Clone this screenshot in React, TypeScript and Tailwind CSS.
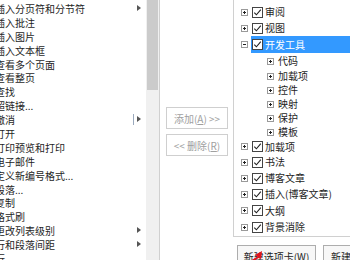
import React from "react";

const font = { fontFamily: '"Noto Sans CJK SC", "Noto Sans", sans-serif' };

const commands: { label: string; sub?: boolean }[] = [
  { label: "插入分页符和分节符", sub: true },
  { label: "插入批注" },
  { label: "插入图片" },
  { label: "插入文本框" },
  { label: "查看多个页面" },
  { label: "查看整页" },
  { label: "查找" },
  { label: "超链接..." },
  { label: "撤消", sub: true },
  { label: "打开" },
  { label: "打印预览和打印" },
  { label: "电子邮件" },
  { label: "定义新编号格式..." },
  { label: "段落..." },
  { label: "复制" },
  { label: "格式刷" },
  { label: "更改列表级别", sub: true },
  { label: "行和段落间距", sub: true },
  { label: "行" },
];

type Node = { label: string; h: string; child?: boolean; open?: boolean; selected?: boolean };

const tree: Node[] = [
  { label: "审阅", h: "h-[16px]" },
  { label: "视图", h: "h-[16px]" },
  { label: "开发工具", h: "h-[17px]", open: true, selected: true },
  { label: "代码", h: "h-[16px]", child: true },
  { label: "加载项", h: "h-[14px]", child: true },
  { label: "控件", h: "h-[14px]", child: true },
  { label: "映射", h: "h-[14px]", child: true },
  { label: "保护", h: "h-[14px]", child: true },
  { label: "模板", h: "h-[14px]", child: true },
  { label: "加载项", h: "h-[15px]" },
  { label: "书法", h: "h-[16px]" },
  { label: "博客文章", h: "h-[16px]" },
  { label: "插入(博客文章)", h: "h-[16.5px]" },
  { label: "大纲", h: "h-[16.5px]" },
  { label: "背景消除", h: "h-[16.5px]" },
];

function ExpandBox({ open }: { open?: boolean }) {
  return (
    <svg width="7" height="7" viewBox="0 0 7 7" className="shrink-0">
      <rect x="0.5" y="0.5" width="6" height="6" fill="white" stroke="#9a9a9a" />
      <line x1="2" y1="3.5" x2="5" y2="3.5" stroke="#222" />
      {!open && <line x1="3.5" y1="2" x2="3.5" y2="5" stroke="#222" />}
    </svg>
  );
}

function Check() {
  return (
    <svg width="11" height="11" viewBox="0 0 11 11" className="shrink-0">
      <rect x="0.5" y="0.5" width="10" height="10" fill="white" stroke="#444" />
      <path d="M2.3 5.6 L4.4 7.8 L8.8 2.6" fill="none" stroke="#222" strokeWidth="1.1" />
    </svg>
  );
}

function Arrow() {
  return (
    <svg width="4" height="6" viewBox="0 0 4 6" className="shrink-0">
      <path d="M0 0 L4 3 L0 6 Z" fill="#555" />
    </svg>
  );
}

export default function App() {
  return (
    <div
      className="relative flex w-[350px] h-[260px] overflow-hidden bg-white text-[10px] text-[#1e1e1e]"
      style={font}
    >
      {/* command list */}
      <div className="flex w-[160px] shrink-0">
        <div className="w-[146px] overflow-hidden pt-[2px]">
          {commands.map((c, i) => (
            <div key={i} className="flex h-[13.9px] items-center justify-between pr-[5px]">
              <span className="ml-[-5px] whitespace-nowrap leading-none">{c.label}</span>
              {c.sub && (
                <div className="flex items-center gap-[3px] -translate-y-[1px]">
                  {c.label === "撤消" && <div className="h-[11px] w-[1px] bg-[#9aa9bd]" />}
                  <Arrow />
                </div>
              )}
            </div>
          ))}
        </div>
        <div className="w-[14px] shrink-0 border-r border-[#d0d0d0] bg-[#f0f0f0]">
          <div className="mx-[1px] h-[90px] bg-[#cbcbcb]" />
        </div>
      </div>

      {/* add / remove buttons */}
      <div className="flex w-[73px] shrink-0 flex-col gap-[5px] pl-[6px] pt-[107px]">
        <div className="flex h-[22px] w-[62px] items-center justify-center border border-[#cfcfcf] text-[#a0a0a0]">
          添加(<span className="underline">A</span>) &gt;&gt;
        </div>
        <div className="flex h-[22px] w-[62px] items-center justify-center border border-[#cfcfcf] text-[#a0a0a0]">
          &lt;&lt; 删除(<span className="underline">R</span>)
        </div>
      </div>

      {/* ribbon tree */}
      <div className="flex flex-1 flex-col">
        <div className="h-[238px] border-b border-l border-[#d0d0d0] pt-[4px]">
          {tree.map((n, i) =>
            n.child ? (
              <div key={i} className={`flex ${n.h} items-center gap-[4px] pl-[33px]`}>
                <ExpandBox />
                <span className="whitespace-nowrap leading-none">{n.label}</span>
              </div>
            ) : (
              <div key={i} className={`flex ${n.h} items-center gap-[3px] pl-[7px] pr-[3px]`}>
                <ExpandBox open={n.open} />
                <div
                  className={`flex h-full flex-1 items-center gap-[2px] pl-[1px] ${
                    n.selected ? "bg-[#3399ff] text-white" : ""
                  }`}
                >
                  <Check />
                  <span className="whitespace-nowrap leading-none">{n.label}</span>
                </div>
              </div>
            )
          )}
        </div>
        <div className="mt-[8px] flex gap-[7px] pl-[4px]">
          <div className="flex h-[23px] w-[79px] shrink-0 items-center justify-center border border-[#adadad] bg-[#f7f7f7]">
            新建选项卡(<span className="underline">W</span>)
          </div>
          <div className="flex h-[23px] w-[60px] shrink-0 items-center border border-[#adadad] bg-[#f7f7f7] pl-[7px]">
            新建组(<span className="underline">N</span>)
          </div>
        </div>
      </div>

      {/* red pointer annotation */}
      <svg className="absolute left-[248px] top-[250px]" width="18" height="12" viewBox="0 0 18 12">
        <path d="M14 1 L7 5 L9.5 6.5 L2 11 L4 12 L11.5 7.5 L13 9.5 Z" fill="#e0141e" />
      </svg>
    </div>
  );
}
